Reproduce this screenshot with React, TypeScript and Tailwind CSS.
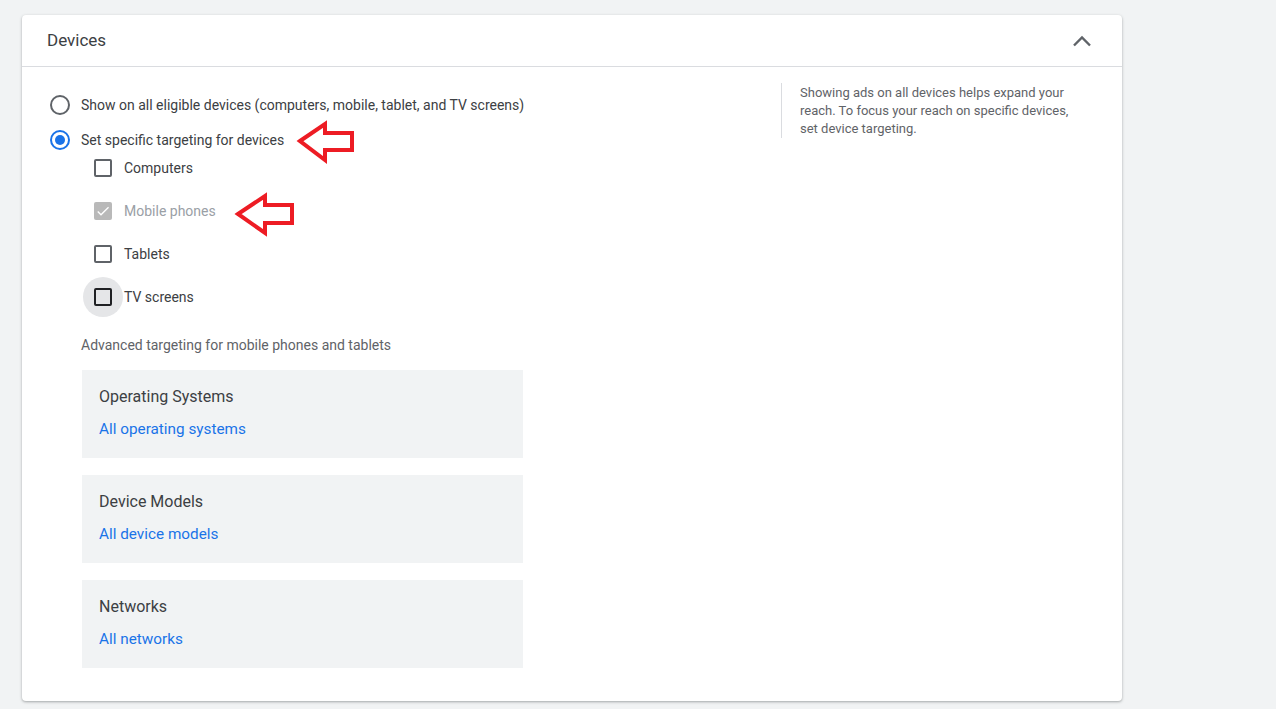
import React from 'react';

// Device targeting panel (collapsible section of a campaign settings form)

interface DeviceOption {
  label: string;
  checked?: boolean;
  disabled?: boolean;
  focused?: boolean;
}

const devices: DeviceOption[] = [
  { label: 'Computers' },
  { label: 'Mobile phones', checked: true, disabled: true },
  { label: 'Tablets' },
  { label: 'TV screens', focused: true },
];

const advanced = [
  { title: 'Operating Systems', link: 'All operating systems' },
  { title: 'Device Models', link: 'All device models' },
  { title: 'Networks', link: 'All networks' },
];

const Radio: React.FC<{ checked?: boolean; label: string }> = ({ checked, label }) => (
  <label className="flex h-[20px] items-center gap-[11px] text-[14px] text-[#3c4043]">
    <span
      className={
        checked
          ? 'flex h-[20px] w-[20px] items-center justify-center rounded-full border-2 border-[#1a73e8]'
          : 'flex h-[20px] w-[20px] items-center justify-center rounded-full border-2 border-[#5f6368]'
      }
    >
      {checked && <span className="h-[10px] w-[10px] rounded-full bg-[#1a73e8]" />}
    </span>
    {label}
  </label>
);

const Checkbox: React.FC<DeviceOption> = ({ label, checked, disabled, focused }) => (
  <label className="flex h-[18px] items-center gap-[12px] text-[14px]">
    <span className="relative flex h-[18px] w-[18px] items-center justify-center">
      {focused && <span className="absolute left-[-11px] top-[-11px] h-[40px] w-[40px] rounded-full bg-[#e5e6e8]" />}
      {checked ? (
        <span className="relative flex h-[18px] w-[18px] items-center justify-center rounded-[2px] bg-[#b9b9b9]">
          <svg width="16" height="16" viewBox="0 0 24 24">
            <path d="M9 16.2 4.8 12l-1.4 1.4L9 19 21 7l-1.4-1.4z" fill="#fff" />
          </svg>
        </span>
      ) : (
        <span
          className={
            focused
              ? 'relative h-[18px] w-[18px] rounded-[2px] border-2 border-[#202124]'
              : 'relative h-[18px] w-[18px] rounded-[2px] border-2 border-[#5f6368]'
          }
        />
      )}
    </span>
    <span className={disabled ? 'text-[#9aa0a6]' : 'text-[#3c4043]'}>{label}</span>
  </label>
);

export default function App() {
  return (
    <div className="relative min-h-[709px] bg-[#f1f3f4] pl-[22px] pt-[15px] font-['Roboto',sans-serif]">
      <div className="w-[1100px] rounded-[4px] bg-white pb-[33px] shadow-[0_1px_3px_rgba(60,64,67,0.3),0_1px_2px_rgba(60,64,67,0.15)]">
        {/* Header */}
        <div className="flex h-[52px] items-center justify-between border-b border-[#dadce0] pl-[25px] pr-[30px]">
          <h2 className="text-[17px] text-[#3c4043]">Devices</h2>
          <svg width="20" height="12" viewBox="0 0 20 12">
            <polyline points="2,10.5 10,2.5 18,10.5" fill="none" stroke="#5f6368" strokeWidth="2.4" />
          </svg>
        </div>

        {/* Body */}
        <div className="flex items-start pl-[28px] pt-[16px]">
          <div className="w-[731px] pt-[12px]">
            <div className="flex flex-col gap-[15px]">
              <Radio label="Show on all eligible devices (computers, mobile, tablet, and TV screens)" />
              <Radio checked label="Set specific targeting for devices" />
            </div>
            <div className="ml-[44px] mt-[9px] flex flex-col gap-[25px]">
              {devices.map((d) => (
                <Checkbox key={d.label} {...d} />
              ))}
            </div>
            <p className="ml-[31px] mt-[29px] text-[14px] leading-[20px] text-[#5f6368]">
              Advanced targeting for mobile phones and tablets
            </p>
            <div className="ml-[32px] mt-[15px] flex w-[441px] flex-col gap-[17px]">
              {advanced.map((a) => (
                <div key={a.title} className="h-[88px] bg-[#f1f3f4] pl-[17px] pt-[17px]">
                  <div className="text-[16px] leading-[20px] text-[#3c4043]">{a.title}</div>
                  <div className="mt-[12px] text-[15.3px] leading-[20px] text-[#1a73e8]">{a.link}</div>
                </div>
              ))}
            </div>
          </div>

          <div className="border-l border-[#dadce0] pl-[18px] pt-[1px]">
            <p className="w-[284px] text-[13px] leading-[18px] text-[#5f6368]">
              Showing ads on all devices helps expand your reach. To focus your reach on specific devices, set device
              targeting.
            </p>
          </div>
        </div>
      </div>

      {/* Red callout arrows */}
      <svg className="pointer-events-none absolute left-0 top-0" width="1276" height="709">
        <polygon
          points="300,141 325,124 325,133 352,133 352,150 325,150 325,160"
          fill="none"
          stroke="#ed1c24"
          strokeWidth="4"
        />
        <polygon
          points="238,214 265,196 265,205 292,205 292,223 265,223 265,233"
          fill="none"
          stroke="#ed1c24"
          strokeWidth="4"
        />
      </svg>
    </div>
  );
}
